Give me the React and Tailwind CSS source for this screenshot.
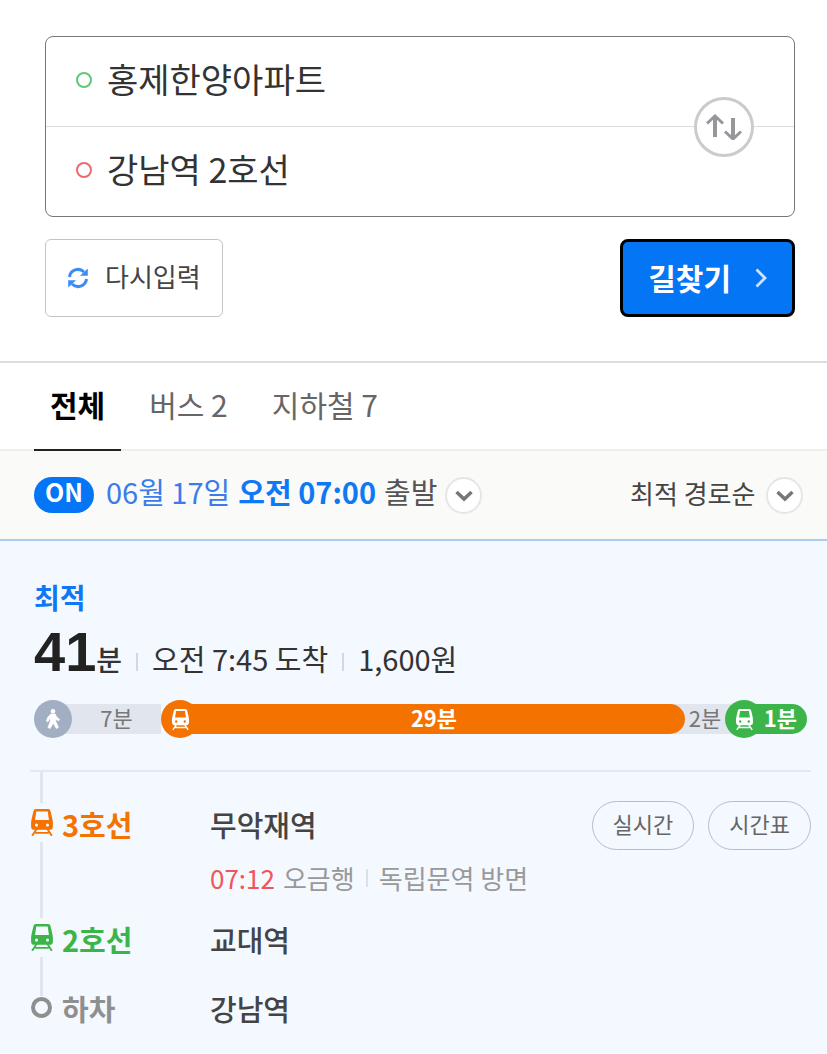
import { useState } from "react";
import clsx from "clsx";

const TABS = [
  { key: "all", label: "전체" },
  { key: "bus", label: "버스 2" },
  { key: "subway", label: "지하철 7" },
];

function TrainIcon({ className }) {
  return (
    <svg viewBox="0 0 21 26" className={className} aria-hidden="true">
      <path
        fill="currentColor"
        fillRule="evenodd"
        d="M4.500 0h12Q18.300 0 18.700 2L20.600 10Q21 12 21 14V17q0 3-3 3H3q-3 0-3-3V14Q0 12 .4 10L2.300 2Q2.700 0 4.500 0zM5 2.500L3.800 10.600h13.400L16 2.500zM5.200 14a1.500 1.500 0 1 0 0 3 1.500 1.500 0 0 0 0-3zM15.800 14a1.500 1.500 0 1 0 0 3 1.500 1.500 0 0 0 0-3z"
      />
      <path
        d="M5.500 19L1 25.800M15.500 19L20 25.800M4 23H17"
        fill="none"
        stroke="currentColor"
        strokeWidth="1.800"
      />
    </svg>
  );
}

function WalkIcon({ className }) {
  return (
    <svg viewBox="0 0 14 20" className={className} aria-hidden="true">
      <circle cx="7" cy="2.300" r="2.300" fill="currentColor" />
      <path
        fill="currentColor"
        stroke="currentColor"
        strokeWidth="0.800"
        strokeLinejoin="round"
        d="M4.800 5h4.400l1.500 3.200 2.800 2-.8 1.500-3-1.400v2l2.700 6.200-2.100.9L7.200 14l-3 5.400-2.200-.9 2.400-6.300V9.400L2.900 10.600 2 12.800.5 12.200 1.600 8.600z"
      />
    </svg>
  );
}

function RefreshIcon({ className }) {
  return (
    <svg viewBox="0 0 22 22" className={className} aria-hidden="true">
      <g fill="none" stroke="currentColor" strokeWidth="3">
        <path d="M2.500 10A8.500 8.500 0 0 1 17 5" />
        <path d="M19.500 12A8.500 8.500 0 0 1 5 17" />
      </g>
      <path fill="currentColor" d="M20.800 1.600V8.800H13zM1.200 20.400V13.200H9z" />
    </svg>
  );
}

function SwapIcon({ className }) {
  return (
    <svg viewBox="0 0 36 26" className={className} aria-hidden="true">
      <g fill="none" stroke="currentColor" strokeWidth="3">
        <path d="M9 23V2.500" strokeWidth="4" />
        <path d="M1 9.500L9 2L17 9.500" />
        <path d="M27 4V24.500" strokeWidth="4" />
        <path d="M19 17.500L27 25L35 17.500" />
      </g>
    </svg>
  );
}

function ChevronBadge({ className }) {
  return (
    <span
      className={clsx(
        "flex size-[37px] items-center justify-center rounded-full border-2 border-[#e6e6e6] bg-white text-[#777]",
        className
      )}
    >
      <svg viewBox="0 0 18 12" className="mt-px h-3 w-[18px]" aria-hidden="true">
        <path d="M1.500 2L9 9L16.500 2" fill="none" stroke="currentColor" strokeWidth="3.500" />
      </svg>
    </span>
  );
}

function PlaceField({ id, label, value, onChange, dotClass }) {
  return (
    <div className="flex h-[89px] items-center gap-[15px] pb-1 pl-[30px] pr-28">
      <span className={clsx("size-4 shrink-0 rounded-full border-2", dotClass)} />
      <input
        id={id}
        type="text"
        aria-label={label}
        value={value}
        onChange={(e) => onChange(e.target.value)}
        className="w-full min-w-0 bg-transparent pb-0.5 text-[34px] leading-[52px] text-[#333] outline-none"
      />
    </div>
  );
}

function BarBadge({ className, children }) {
  return (
    <span
      className={clsx(
        "z-20 flex size-[38px] shrink-0 items-center justify-center rounded-full text-white",
        className
      )}
    >
      {children}
    </span>
  );
}

function PillButton({ children }) {
  return (
    <button
      type="button"
      className="h-[49px] rounded-full border border-[#b9bcc4] px-5 pb-1 text-[22px] leading-8 text-[#666]"
    >
      {children}
    </button>
  );
}

export default function App() {
  const [start, setStart] = useState("홍제한양아파트");
  const [goal, setGoal] = useState("강남역 2호선");
  const [tab, setTab] = useState("all");

  const swap = () => {
    setStart(goal);
    setGoal(start);
  };

  const reset = () => {
    setStart("");
    setGoal("");
  };

  return (
    <div className="flex min-h-screen flex-col bg-white font-['Noto_Sans_CJK_KR',sans-serif]">
      {/* Search form */}
      <form
        className="pb-11 pl-[45px] pr-8 pt-9"
        onSubmit={(e) => e.preventDefault()}
      >
        <div className="relative rounded-lg border border-[#77777a]">
          <PlaceField
            id="start"
            label="출발지"
            value={start}
            onChange={setStart}
            dotClass="border-[#5fc878]"
          />
          <div className="border-t border-[#dcdcdc]" />
          <PlaceField
            id="goal"
            label="도착지"
            value={goal}
            onChange={setGoal}
            dotClass="border-[#ee6a70]"
          />
          <button
            type="button"
            onClick={swap}
            aria-label="출발지 도착지 바꾸기"
            className="absolute right-10 top-1/2 flex size-[60px] -translate-y-1/2 items-center justify-center rounded-full border-3 border-[#cbcbcb] bg-white text-[#95979b]"
          >
            <SwapIcon className="h-[26px] w-9" />
          </button>
        </div>

        <div className="mt-[22px] flex justify-between">
          <button
            type="button"
            onClick={reset}
            className="flex h-[78px] items-center gap-4 rounded-md border border-[#c4c4c4] px-[21px] text-[26px] text-[#444]"
          >
            <RefreshIcon className="size-[22px] text-[#3c8cf8]" />
            <span className="pb-1.5">다시입력</span>
          </button>
          <button
            type="submit"
            className="flex h-[78px] items-center gap-6 rounded-lg border-3 border-black bg-[#0475f4] px-[25px] text-[30px] font-bold text-white"
          >
            <span className="pb-0.5">길찾기</span>
            <svg viewBox="0 0 12 20" className="h-5 w-3" aria-hidden="true">
              <path d="M1.500 1.500L10 10L1.500 18.500" fill="none" stroke="#cfe3ff" strokeWidth="2.800" />
            </svg>
          </button>
        </div>
      </form>

      {/* Tabs */}
      <nav className="flex h-[90px] border-b-2 border-t-2 border-b-[#eee] border-t-[#ddd] pl-[34px]">
        {TABS.map((item) => (
          <button
            key={item.key}
            type="button"
            onClick={() => setTab(item.key)}
            className={clsx(
              "-mb-[2px] mr-3 border-b-2 px-4 pb-1 text-[30px]",
              tab === item.key
                ? "border-[#222] font-bold text-black"
                : "border-transparent text-[#666]"
            )}
          >
            {item.label}
          </button>
        ))}
      </nav>

      {/* Departure time and sort order */}
      <div className="flex h-[90px] items-center justify-between border-b-2 border-[#a9ccf0] bg-[#fafaf9] pl-[34px] pr-6">
        <button type="button" className="flex items-center text-[29px] text-[#555]">
          <span className="mr-3 flex h-9 items-center rounded-full bg-[#0475f4] px-[11px] pb-1.5 text-[25px] font-bold text-white">
            ON
          </span>
          <span className="flex gap-2 pb-1.5">
            <span className="text-[#3b7bea]">06월 17일</span>
            <strong className="font-bold text-[#0f78f5]">오전 07:00</strong>
            <span>출발</span>
          </span>
          <ChevronBadge className="ml-2" />
        </button>
        <div className="relative flex items-center">
          <select
            aria-label="정렬"
            className="appearance-none bg-transparent pb-1.5 pr-[47px] text-[26px] text-[#444] outline-none"
          >
            <option>최적 경로순</option>
          </select>
          <ChevronBadge className="pointer-events-none absolute right-0" />
        </div>
      </div>

      {/* Best route */}
      <main className="flex-1 bg-[#f4f8ff] pb-6 pl-[30px] pr-4 pt-9">
        <section className="pl-1 pr-1">
          <h2 className="text-[28px] font-bold leading-10 text-[#0f78f5]">최적</h2>
          <p className="flex items-baseline text-[29px] leading-[70px] text-[#333]">
            <strong className="font-['Liberation_Sans',sans-serif] text-[56px] font-bold text-[#222]">
              41
            </strong>
            <span className="text-[28px] font-medium">분</span>
            <span className="mx-[14px] h-[18px] w-[2px] bg-[#d3d7e0]" />
            <span>오전 7:45 도착</span>
            <span className="mx-[14px] h-[18px] w-[2px] bg-[#d3d7e0]" />
            <span>1,600원</span>
          </p>

          <div className="mt-1.5 flex items-center text-[22px] leading-[26px] text-[#777]">
            <BarBadge className="bg-[#a2afc3]">
              <WalkIcon className="h-5 w-[14px]" />
            </BarBadge>
            <div className="-ml-4 flex h-[30px] flex-[89] items-center justify-center bg-[#e1e5ee] pb-1 pl-4">
              7분
            </div>
            <BarBadge className="bg-[#f37200]">
              <TrainIcon className="h-[21px] w-[17px]" />
            </BarBadge>
            <div className="z-10 -ml-4 flex h-[30px] flex-[502] items-center justify-center rounded-r-full bg-[#f37200] pb-1 font-bold text-white">
              29분
            </div>
            <div className="-ml-4 -mr-4 flex h-[30px] w-[72px] items-center justify-center bg-[#e1e5ee] pb-1">
              2분
            </div>
            <BarBadge className="bg-[#3bb54a]">
              <TrainIcon className="h-[21px] w-[17px]" />
            </BarBadge>
            <div className="-ml-4 flex h-[30px] w-[60px] items-center justify-end rounded-r-full bg-[#3bb54a] pb-1 pr-[10px] font-bold text-white">
              1분
            </div>
          </div>
        </section>

        {/* Stops */}
        <ol className="mt-8 border-t-2 border-[#e3e8f2] text-[29px] leading-[42px] text-[#444]">
          <li className="flex gap-[9px]">
            <div className="flex w-[23px] flex-col items-center">
              <span className="h-[31px] w-[3px] bg-[#e1e5ef]" />
              <TrainIcon className="my-[6px] h-[27px] w-[22px] text-[#f37200]" />
              <span className="w-[3px] flex-1 bg-[#e1e5ef]" />
            </div>
            <div className="flex flex-1 pt-[31px]">
              <strong className="w-[148px] font-bold text-[#f37200]">3호선</strong>
              <div className="h-[115px] flex-1 font-medium">
                무악재역
                <p className="mt-3 flex items-center text-[26px] font-normal text-[#999]">
                  <span className="text-[#f2545b]">07:12</span>
                  <span className="ml-2">오금행</span>
                  <span className="mx-[11px] h-[18px] w-[2px] bg-[#dcdfe6]" />
                  <span>독립문역 방면</span>
                </p>
              </div>
              <div className="flex h-[44px] items-center gap-[14px]">
                <PillButton>실시간</PillButton>
                <PillButton>시간표</PillButton>
              </div>
            </div>
          </li>
          <li className="flex h-[78px] gap-[9px]">
            <div className="flex w-[23px] flex-col items-center">
              <TrainIcon className="my-[6px] h-[27px] w-[22px] text-[#3bb54a]" />
              <span className="w-[3px] flex-1 bg-[#e1e5ef]" />
            </div>
            <strong className="w-[139px] font-bold text-[#3bb54a]">2호선</strong>
            <span className="font-medium">교대역</span>
          </li>
          <li className="flex gap-[9px] leading-6">
            <div className="flex w-[23px] flex-col items-center">
              <span className="mt-px size-[21px] rounded-full border-4 border-[#8f8f8f]" />
            </div>
            <strong className="w-[139px] font-bold text-[#8f8f8f]">하차</strong>
            <span className="font-medium">강남역</span>
          </li>
        </ol>
      </main>
    </div>
  );
}
